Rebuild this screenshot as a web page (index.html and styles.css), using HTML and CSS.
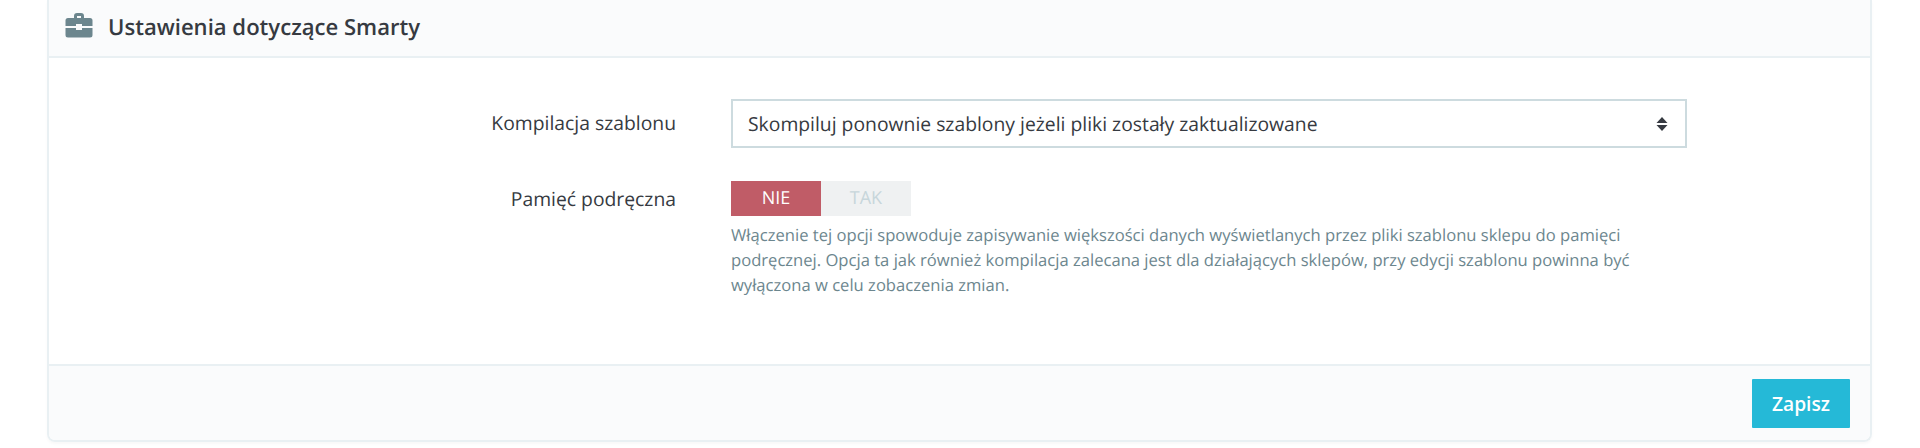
FILE: index.html
```html
<!DOCTYPE html>
<html lang="pl">
<head>
    <meta charset="UTF-8">
    <meta name="viewport" content="width=device-width, initial-scale=1.0">
    <title>Ustawienia dotyczące Smarty</title>
    <link rel="stylesheet" href="styles.css">
</head>
<body>
    <div class="panel">
        <div class="panel-heading">
            <svg class="heading-icon" viewBox="0 0 28 26" aria-hidden="true">
                <path d="M9 6V4a3 3 0 0 1 3-3h4a3 3 0 0 1 3 3v2h-3V4h-4v2z"/>
                <path d="M3 6h22a2.500 2.500 0 0 1 2.500 2.500V14H17v-2h-6v2H.5V8.500A2.500 2.500 0 0 1 3 6z"/>
                <path d="M.5 16H11v2h6v-2h10.500v7a2.500 2.500 0 0 1-2.500 2.500H3A2.500 2.500 0 0 1 .5 23z"/>
            </svg>
            <h3>Ustawienia dotyczące Smarty</h3>
        </div>
        <div class="panel-body">
            <div class="form-group">
                <label class="control-label label-select">Kompilacja szablonu</label>
                <div class="control">
                    <div class="select-box">
                        <span>Skompiluj ponownie szablony jeżeli pliki zostały zaktualizowane</span>
                        <svg class="select-arrows" viewBox="0 0 12 14" aria-hidden="true">
                            <path d="M6 0l5.500 6H.5z"/>
                            <path d="M.5 8h11L6 14z"/>
                        </svg>
                    </div>
                </div>
            </div>
            <div class="form-group">
                <label class="control-label">Pamięć podręczna</label>
                <div class="control">
                    <div class="switch">
                        <span class="switch-off">NIE</span>
                        <span class="switch-on">TAK</span>
                    </div>
                    <p class="help-block">Włączenie tej opcji spowoduje zapisywanie większości danych wyświetlanych przez pliki szablonu sklepu do pamięci podręcznej. Opcja ta jak również kompilacja zalecana jest dla działających sklepów, przy edycji szablonu powinna być wyłączona w celu zobaczenia zmian.</p>
                </div>
            </div>
        </div>
        <div class="panel-footer">
            <button class="btn-save" type="button">Zapisz</button>
        </div>
    </div>
</body>
</html>
```

FILE: styles.css
```css
* {
    box-sizing: border-box;
}
body {
    margin: 0;
    padding: 0 48px 6px 47px;
    background: #fff;
    font-family: "Open Sans", sans-serif;
    color: #363a41;
    text-rendering: geometricPrecision;
}
.panel {
    height: 442px;
    display: flex;
    flex-direction: column;
    border: 2px solid #e9f0f3;
    border-top: 0;
    border-radius: 0 0 8px 8px;
    box-shadow: 0 2px 3px rgba(0, 0, 0, 0.03);
}
.panel-heading {
    height: 58px;
    display: flex;
    align-items: center;
    gap: 15px;
    padding: 0 16px;
    background: #fafbfc;
    border-bottom: 2px solid #e9f0f3;
}
.heading-icon {
    width: 28px;
    height: 26px;
    fill: #6c868e;
    margin-top: -6px;
}
.panel-heading h3 {
    margin: -3px 0 0;
    font-size: 22.1px;
    font-weight: 600;
    color: #363a41;
}
.panel-body {
    flex: 1;
    padding-top: 41px;
}
.form-group {
    display: flex;
    margin-bottom: 33px;
}
.control-label {
    width: 627px;
    padding-top: 5px;
    text-align: right;
    font-size: 19.33px;
    line-height: 26px;
}
.label-select {
    padding-top: 11px;
}
.control {
    width: 956px;
    margin-left: 55px;
}
.select-box {
    height: 49px;
    display: flex;
    align-items: center;
    justify-content: space-between;
    padding: 0 15px;
    border: 2px solid #cddbdf;
    font-size: 19.33px;
}
.select-arrows {
    width: 12px;
    height: 14px;
    fill: #363a41;
    margin-right: 2px;
}
.switch {
    display: flex;
    width: 180px;
    height: 35px;
    font-size: 18px;
    line-height: 35px;
    text-align: center;
}
.switch-off {
    flex: 1;
    background: #c05c67;
    color: #fff;
}
.switch-on {
    flex: 1;
    background: #eff1f2;
    color: #c7d6db;
}
.help-block {
    margin: 6px 0 0;
    font-size: 16.6px;
    line-height: 25px;
    color: #6c868e;
}
.panel-footer {
    height: 76px;
    display: flex;
    align-items: flex-start;
    justify-content: flex-end;
    padding: 13px 20px 0 0;
    background: #fafbfc;
    border-top: 2px solid #e9f0f3;
    border-radius: 0 0 6px 6px;
}
.btn-save {
    width: 98px;
    height: 49px;
    border: 0;
    border-radius: 1px;
    background: #25b9d7;
    color: #fff;
    font-family: inherit;
    font-size: 19.2px;
    font-weight: 600;
}
```
